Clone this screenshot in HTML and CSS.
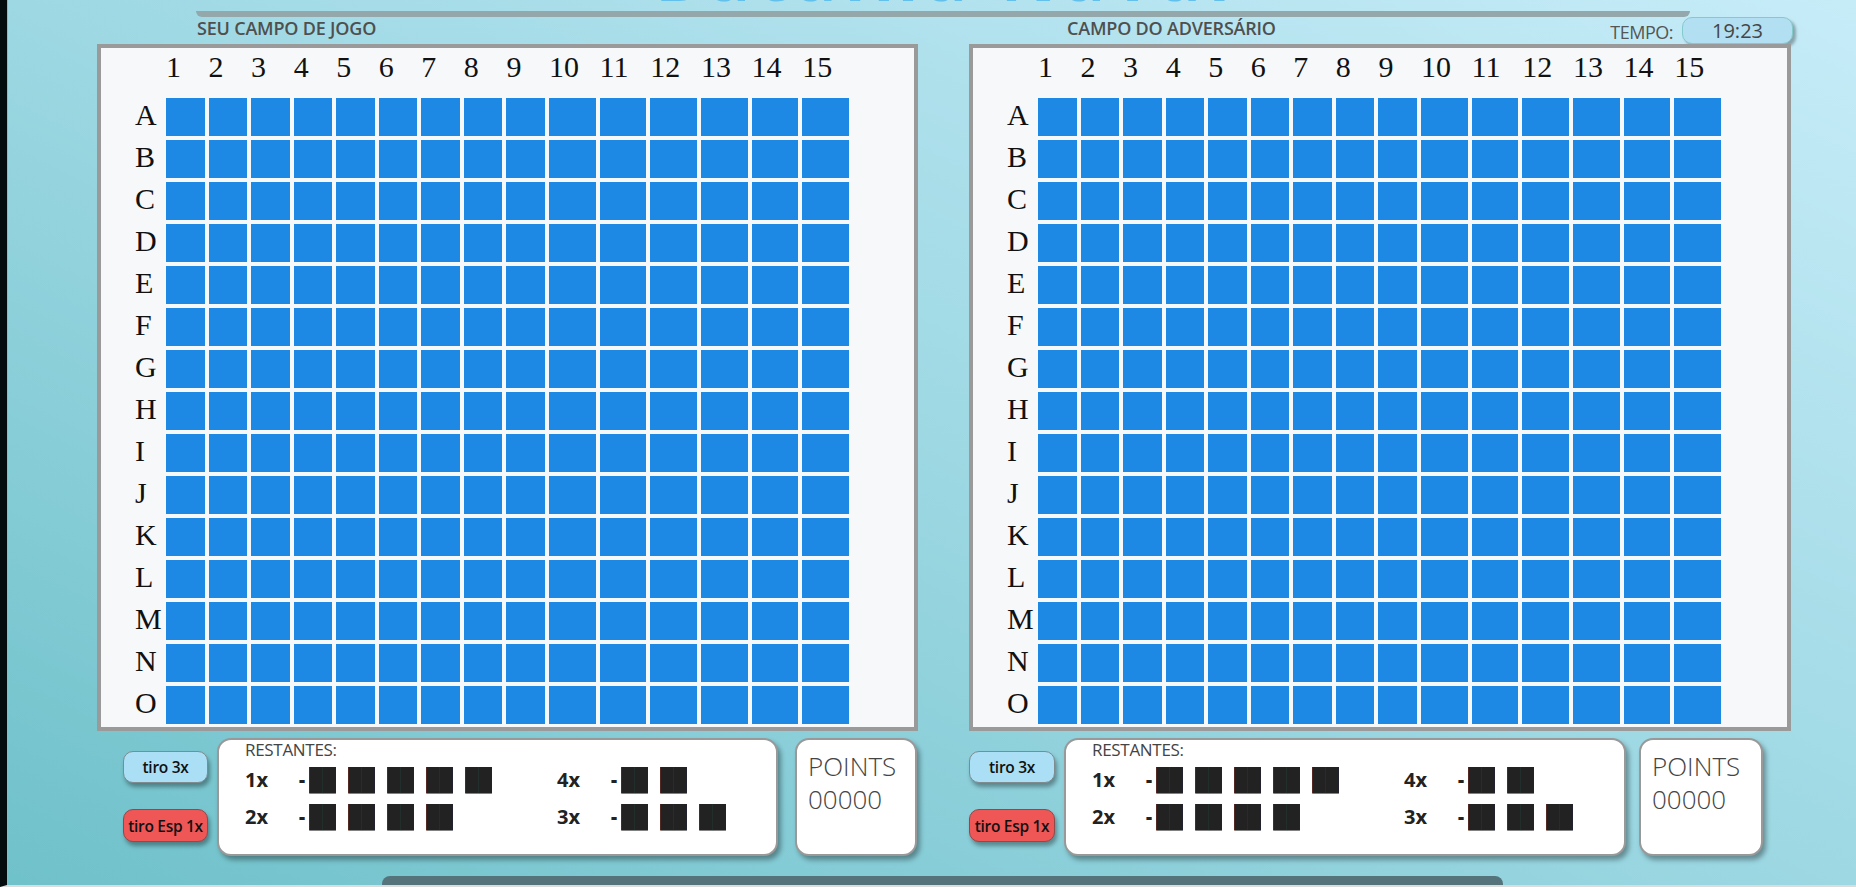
FILE: index.html
```html
<!DOCTYPE html>
<html lang="pt">
<head>
<meta charset="utf-8">
<title>Batalha Naval</title>
<link rel="stylesheet" href="styles.css">
</head>
<body>
<div class="page">
  <div class="title">Batalha Naval</div>
  <div class="topbar"></div>
  <div class="fields">
    <section class="field field-left">
      <div class="field-head"><h2>SEU CAMPO DE JOGO</h2></div>
      <div class="board">
        <span class="corner"></span><span class="num">1</span><span class="num">2</span><span class="num">3</span><span class="num">4</span><span class="num">5</span><span class="num">6</span><span class="num">7</span><span class="num">8</span><span class="num">9</span><span class="num">10</span><span class="num">11</span><span class="num">12</span><span class="num">13</span><span class="num">14</span><span class="num">15</span>
        <span class="let">A</span><span class="c"></span><span class="c"></span><span class="c"></span><span class="c"></span><span class="c"></span><span class="c"></span><span class="c"></span><span class="c"></span><span class="c"></span><span class="c"></span><span class="c"></span><span class="c"></span><span class="c"></span><span class="c"></span><span class="c"></span>
        <span class="let">B</span><span class="c"></span><span class="c"></span><span class="c"></span><span class="c"></span><span class="c"></span><span class="c"></span><span class="c"></span><span class="c"></span><span class="c"></span><span class="c"></span><span class="c"></span><span class="c"></span><span class="c"></span><span class="c"></span><span class="c"></span>
        <span class="let">C</span><span class="c"></span><span class="c"></span><span class="c"></span><span class="c"></span><span class="c"></span><span class="c"></span><span class="c"></span><span class="c"></span><span class="c"></span><span class="c"></span><span class="c"></span><span class="c"></span><span class="c"></span><span class="c"></span><span class="c"></span>
        <span class="let">D</span><span class="c"></span><span class="c"></span><span class="c"></span><span class="c"></span><span class="c"></span><span class="c"></span><span class="c"></span><span class="c"></span><span class="c"></span><span class="c"></span><span class="c"></span><span class="c"></span><span class="c"></span><span class="c"></span><span class="c"></span>
        <span class="let">E</span><span class="c"></span><span class="c"></span><span class="c"></span><span class="c"></span><span class="c"></span><span class="c"></span><span class="c"></span><span class="c"></span><span class="c"></span><span class="c"></span><span class="c"></span><span class="c"></span><span class="c"></span><span class="c"></span><span class="c"></span>
        <span class="let">F</span><span class="c"></span><span class="c"></span><span class="c"></span><span class="c"></span><span class="c"></span><span class="c"></span><span class="c"></span><span class="c"></span><span class="c"></span><span class="c"></span><span class="c"></span><span class="c"></span><span class="c"></span><span class="c"></span><span class="c"></span>
        <span class="let">G</span><span class="c"></span><span class="c"></span><span class="c"></span><span class="c"></span><span class="c"></span><span class="c"></span><span class="c"></span><span class="c"></span><span class="c"></span><span class="c"></span><span class="c"></span><span class="c"></span><span class="c"></span><span class="c"></span><span class="c"></span>
        <span class="let">H</span><span class="c"></span><span class="c"></span><span class="c"></span><span class="c"></span><span class="c"></span><span class="c"></span><span class="c"></span><span class="c"></span><span class="c"></span><span class="c"></span><span class="c"></span><span class="c"></span><span class="c"></span><span class="c"></span><span class="c"></span>
        <span class="let">I</span><span class="c"></span><span class="c"></span><span class="c"></span><span class="c"></span><span class="c"></span><span class="c"></span><span class="c"></span><span class="c"></span><span class="c"></span><span class="c"></span><span class="c"></span><span class="c"></span><span class="c"></span><span class="c"></span><span class="c"></span>
        <span class="let">J</span><span class="c"></span><span class="c"></span><span class="c"></span><span class="c"></span><span class="c"></span><span class="c"></span><span class="c"></span><span class="c"></span><span class="c"></span><span class="c"></span><span class="c"></span><span class="c"></span><span class="c"></span><span class="c"></span><span class="c"></span>
        <span class="let">K</span><span class="c"></span><span class="c"></span><span class="c"></span><span class="c"></span><span class="c"></span><span class="c"></span><span class="c"></span><span class="c"></span><span class="c"></span><span class="c"></span><span class="c"></span><span class="c"></span><span class="c"></span><span class="c"></span><span class="c"></span>
        <span class="let">L</span><span class="c"></span><span class="c"></span><span class="c"></span><span class="c"></span><span class="c"></span><span class="c"></span><span class="c"></span><span class="c"></span><span class="c"></span><span class="c"></span><span class="c"></span><span class="c"></span><span class="c"></span><span class="c"></span><span class="c"></span>
        <span class="let">M</span><span class="c"></span><span class="c"></span><span class="c"></span><span class="c"></span><span class="c"></span><span class="c"></span><span class="c"></span><span class="c"></span><span class="c"></span><span class="c"></span><span class="c"></span><span class="c"></span><span class="c"></span><span class="c"></span><span class="c"></span>
        <span class="let">N</span><span class="c"></span><span class="c"></span><span class="c"></span><span class="c"></span><span class="c"></span><span class="c"></span><span class="c"></span><span class="c"></span><span class="c"></span><span class="c"></span><span class="c"></span><span class="c"></span><span class="c"></span><span class="c"></span><span class="c"></span>
        <span class="let">O</span><span class="c"></span><span class="c"></span><span class="c"></span><span class="c"></span><span class="c"></span><span class="c"></span><span class="c"></span><span class="c"></span><span class="c"></span><span class="c"></span><span class="c"></span><span class="c"></span><span class="c"></span><span class="c"></span><span class="c"></span>
      </div>
      <div class="controls">
        <div class="btns">
          <button class="btn btn-blue">tiro 3x</button>
          <button class="btn btn-red">tiro Esp 1x</button>
        </div>
        <div class="restantes">
          <div class="rest-title">RESTANTES:</div>
          <div class="fleet">
            <div class="entry"><span class="qty">1x</span><span class="dash">-</span><span class="ships"><span class="ship">██</span><span class="ship">██</span><span class="ship">██</span><span class="ship">██</span><span class="ship">██</span></span></div>
            <div class="entry"><span class="qty">4x</span><span class="dash">-</span><span class="ships"><span class="ship">██</span><span class="ship">██</span></span></div>
            <div class="entry"><span class="qty">2x</span><span class="dash">-</span><span class="ships"><span class="ship">██</span><span class="ship">██</span><span class="ship">██</span><span class="ship">██</span></span></div>
            <div class="entry"><span class="qty">3x</span><span class="dash">-</span><span class="ships"><span class="ship">██</span><span class="ship">██</span><span class="ship">██</span></span></div>
          </div>
        </div>
        <div class="points">POINTS<br>00000</div>
      </div>
    </section>

    <section class="field field-right">
      <div class="field-head"><h2>CAMPO DO ADVERSÁRIO</h2><div class="tempo"><span class="tempo-label">TEMPO:</span><span class="clock">19:23</span></div></div>
      <div class="board">
        <span class="corner"></span><span class="num">1</span><span class="num">2</span><span class="num">3</span><span class="num">4</span><span class="num">5</span><span class="num">6</span><span class="num">7</span><span class="num">8</span><span class="num">9</span><span class="num">10</span><span class="num">11</span><span class="num">12</span><span class="num">13</span><span class="num">14</span><span class="num">15</span>
        <span class="let">A</span><span class="c"></span><span class="c"></span><span class="c"></span><span class="c"></span><span class="c"></span><span class="c"></span><span class="c"></span><span class="c"></span><span class="c"></span><span class="c"></span><span class="c"></span><span class="c"></span><span class="c"></span><span class="c"></span><span class="c"></span>
        <span class="let">B</span><span class="c"></span><span class="c"></span><span class="c"></span><span class="c"></span><span class="c"></span><span class="c"></span><span class="c"></span><span class="c"></span><span class="c"></span><span class="c"></span><span class="c"></span><span class="c"></span><span class="c"></span><span class="c"></span><span class="c"></span>
        <span class="let">C</span><span class="c"></span><span class="c"></span><span class="c"></span><span class="c"></span><span class="c"></span><span class="c"></span><span class="c"></span><span class="c"></span><span class="c"></span><span class="c"></span><span class="c"></span><span class="c"></span><span class="c"></span><span class="c"></span><span class="c"></span>
        <span class="let">D</span><span class="c"></span><span class="c"></span><span class="c"></span><span class="c"></span><span class="c"></span><span class="c"></span><span class="c"></span><span class="c"></span><span class="c"></span><span class="c"></span><span class="c"></span><span class="c"></span><span class="c"></span><span class="c"></span><span class="c"></span>
        <span class="let">E</span><span class="c"></span><span class="c"></span><span class="c"></span><span class="c"></span><span class="c"></span><span class="c"></span><span class="c"></span><span class="c"></span><span class="c"></span><span class="c"></span><span class="c"></span><span class="c"></span><span class="c"></span><span class="c"></span><span class="c"></span>
        <span class="let">F</span><span class="c"></span><span class="c"></span><span class="c"></span><span class="c"></span><span class="c"></span><span class="c"></span><span class="c"></span><span class="c"></span><span class="c"></span><span class="c"></span><span class="c"></span><span class="c"></span><span class="c"></span><span class="c"></span><span class="c"></span>
        <span class="let">G</span><span class="c"></span><span class="c"></span><span class="c"></span><span class="c"></span><span class="c"></span><span class="c"></span><span class="c"></span><span class="c"></span><span class="c"></span><span class="c"></span><span class="c"></span><span class="c"></span><span class="c"></span><span class="c"></span><span class="c"></span>
        <span class="let">H</span><span class="c"></span><span class="c"></span><span class="c"></span><span class="c"></span><span class="c"></span><span class="c"></span><span class="c"></span><span class="c"></span><span class="c"></span><span class="c"></span><span class="c"></span><span class="c"></span><span class="c"></span><span class="c"></span><span class="c"></span>
        <span class="let">I</span><span class="c"></span><span class="c"></span><span class="c"></span><span class="c"></span><span class="c"></span><span class="c"></span><span class="c"></span><span class="c"></span><span class="c"></span><span class="c"></span><span class="c"></span><span class="c"></span><span class="c"></span><span class="c"></span><span class="c"></span>
        <span class="let">J</span><span class="c"></span><span class="c"></span><span class="c"></span><span class="c"></span><span class="c"></span><span class="c"></span><span class="c"></span><span class="c"></span><span class="c"></span><span class="c"></span><span class="c"></span><span class="c"></span><span class="c"></span><span class="c"></span><span class="c"></span>
        <span class="let">K</span><span class="c"></span><span class="c"></span><span class="c"></span><span class="c"></span><span class="c"></span><span class="c"></span><span class="c"></span><span class="c"></span><span class="c"></span><span class="c"></span><span class="c"></span><span class="c"></span><span class="c"></span><span class="c"></span><span class="c"></span>
        <span class="let">L</span><span class="c"></span><span class="c"></span><span class="c"></span><span class="c"></span><span class="c"></span><span class="c"></span><span class="c"></span><span class="c"></span><span class="c"></span><span class="c"></span><span class="c"></span><span class="c"></span><span class="c"></span><span class="c"></span><span class="c"></span>
        <span class="let">M</span><span class="c"></span><span class="c"></span><span class="c"></span><span class="c"></span><span class="c"></span><span class="c"></span><span class="c"></span><span class="c"></span><span class="c"></span><span class="c"></span><span class="c"></span><span class="c"></span><span class="c"></span><span class="c"></span><span class="c"></span>
        <span class="let">N</span><span class="c"></span><span class="c"></span><span class="c"></span><span class="c"></span><span class="c"></span><span class="c"></span><span class="c"></span><span class="c"></span><span class="c"></span><span class="c"></span><span class="c"></span><span class="c"></span><span class="c"></span><span class="c"></span><span class="c"></span>
        <span class="let">O</span><span class="c"></span><span class="c"></span><span class="c"></span><span class="c"></span><span class="c"></span><span class="c"></span><span class="c"></span><span class="c"></span><span class="c"></span><span class="c"></span><span class="c"></span><span class="c"></span><span class="c"></span><span class="c"></span><span class="c"></span>
      </div>
      <div class="controls">
        <div class="btns">
          <button class="btn btn-blue">tiro 3x</button>
          <button class="btn btn-red">tiro Esp 1x</button>
        </div>
        <div class="restantes">
          <div class="rest-title">RESTANTES:</div>
          <div class="fleet">
            <div class="entry"><span class="qty">1x</span><span class="dash">-</span><span class="ships"><span class="ship">██</span><span class="ship">██</span><span class="ship">██</span><span class="ship">██</span><span class="ship">██</span></span></div>
            <div class="entry"><span class="qty">4x</span><span class="dash">-</span><span class="ships"><span class="ship">██</span><span class="ship">██</span></span></div>
            <div class="entry"><span class="qty">2x</span><span class="dash">-</span><span class="ships"><span class="ship">██</span><span class="ship">██</span><span class="ship">██</span><span class="ship">██</span></span></div>
            <div class="entry"><span class="qty">3x</span><span class="dash">-</span><span class="ships"><span class="ship">██</span><span class="ship">██</span><span class="ship">██</span></span></div>
          </div>
        </div>
        <div class="points">POINTS<br>00000</div>
      </div>
    </section>
  </div>
  <div class="bottombar"></div>
</div>
</body>
</html>
```

FILE: styles.css
```css
* { box-sizing: border-box; margin: 0; padding: 0; }
html, body { width: 1856px; height: 887px; overflow: hidden; }
body { font-family: "Open Sans", "DejaVu Sans", sans-serif; }

.page {
  height: 887px;
  display: flex;
  flex-direction: column;
  border-left: 7px solid #040c0d;
  border-bottom: 2px solid #dcdcdc;
  box-shadow: inset 1px 0 0 #3fd9e4;
  background: linear-gradient(to top right, #6fc1ca 0%, #9dd8e3 50%, #c6ecf8 100%);
}

.title {
  height: 60px;
  margin-top: -55px;
  font-size: 68px;
  line-height: 60px;
  font-weight: 700;
  letter-spacing: 8px;
  text-align: center;
  color: #62c0ea;
  padding-left: 30px;
}

.topbar {
  margin: 6px 0 0 189px;
  width: 1494px;
  height: 6px;
  background: #94a8ac;
  border-radius: 0 0 6px 6px;
}

.fields {
  display: flex;
  gap: 51px;
  padding-left: 90px;
}

.field { display: flex; flex-direction: column; }
.field-left { width: 821px; }
.field-right { width: 822px; }

.field-head {
  height: 27px;
  display: flex;
  align-items: flex-start;
}
.field-head h2 {
  font-size: 18px;
  line-height: 22px;
  font-weight: 600;
  color: #4f4f4f;
  letter-spacing: -0.2px;
}
.field-left h2 { margin-left: 100px; }
.field-right h2 { margin-left: 98px; }

.tempo {
  margin-left: auto;
  margin-right: -2px;
  display: flex;
  align-items: flex-start;
}
.tempo-label {
  margin-top: 4px;
  margin-right: 9px;
  font-size: 18px;
  line-height: 22px;
  color: #555;
  letter-spacing: -0.5px;
}
.clock {
  width: 111px;
  height: 27px;
  padding-top: 1px;
  border: 1.5px solid #84caca;
  border-radius: 10px;
  background: #b2dff1;
  box-shadow: 3px 3px 3px rgba(0, 0, 0, 0.3);
  text-align: center;
  font-size: 20px;
  line-height: 24px;
  color: #454545;
}

.board {
  border: 4px solid #9a9a9a;
  background: #f7f8fa;
  padding: 4px 0 3px 34px;
  display: grid;
  grid-template-columns: 27px repeat(9, 38.56px) repeat(6, 46.67px);
  grid-template-rows: 42px repeat(15, 38px);
  column-gap: 4px;
  row-gap: 4px;
  font-family: "Liberation Serif", "Times New Roman", serif;
  font-size: 30px;
  color: #111;
}
.num { line-height: 30px; align-self: start; }
.let { line-height: 34px; align-self: start; }
.c { background: #1e88e5; }

.controls {
  display: flex;
  margin-top: 7px;
  height: 118px;
}
.field-left .controls { padding-left: 26px; }

.btns {
  display: flex;
  flex-direction: column;
  gap: 26px;
  padding-top: 13px;
  width: 85px;
  margin-right: 9px;
}
.field-right .btns { width: 86px; }

.btn {
  height: 32px;
  border-radius: 10px;
  border: 1.5px solid #7e8b8f;
  font-family: "Open Sans", "DejaVu Sans", sans-serif;
  font-size: 15.5px;
  font-weight: 600;
  color: #111;
  box-shadow: 2px 4px 4px rgba(0, 0, 0, 0.35);
  letter-spacing: -0.3px;
  white-space: nowrap;
}
.btn-blue { background: #aadff6; }
.btn-red { height: 33px; background: #ef5757; border-color: #8e4a4a; }

.restantes {
  width: 561px;
  background: #fff;
  border: 2px solid #999;
  border-radius: 14px;
  box-shadow: 3px 4px 5px rgba(0, 0, 0, 0.35);
  padding-left: 26px;
  margin-right: 17px;
}
.field-right .restantes { width: 562px; margin-right: 13px; }

.rest-title {
  font-size: 17px;
  line-height: 20px;
  color: #444;
  letter-spacing: -0.3px;
}

.fleet {
  margin-top: 6px;
  display: grid;
  grid-template-columns: 312px auto;
  row-gap: 9px;
}
.entry {
  display: flex;
  align-items: center;
  height: 28px;
}
.qty {
  width: 54px;
  font-size: 20px;
  line-height: 28px;
  font-weight: 700;
  color: #222;
}
.dash {
  font-size: 19px;
  line-height: 28px;
  font-weight: 800;
  color: #222;
  width: 10px;
}
.ships { display: flex; gap: 12px; }
.ship {
  display: block;
  width: 27px;
  height: 28px;
  overflow: hidden;
  font-family: "DejaVu Sans Mono", monospace;
  font-size: 22.4px;
  line-height: 28px;
  color: #222;
  letter-spacing: 0;
}

.points {
  width: 122px;
  background: #fff;
  border: 2px solid #999;
  border-radius: 14px;
  box-shadow: 3px 4px 5px rgba(0, 0, 0, 0.35);
  padding: 10px 0 0 11px;
  font-size: 26px;
  line-height: 33px;
  font-weight: 300;
  color: #444;
}
.field-right .points { width: 124px; }

.bottombar {
  margin: 20px 0 0 375px;
  width: 1121px;
  height: 9px;
  background: #54737a;
  border-radius: 8px 8px 0 0;
}
```
